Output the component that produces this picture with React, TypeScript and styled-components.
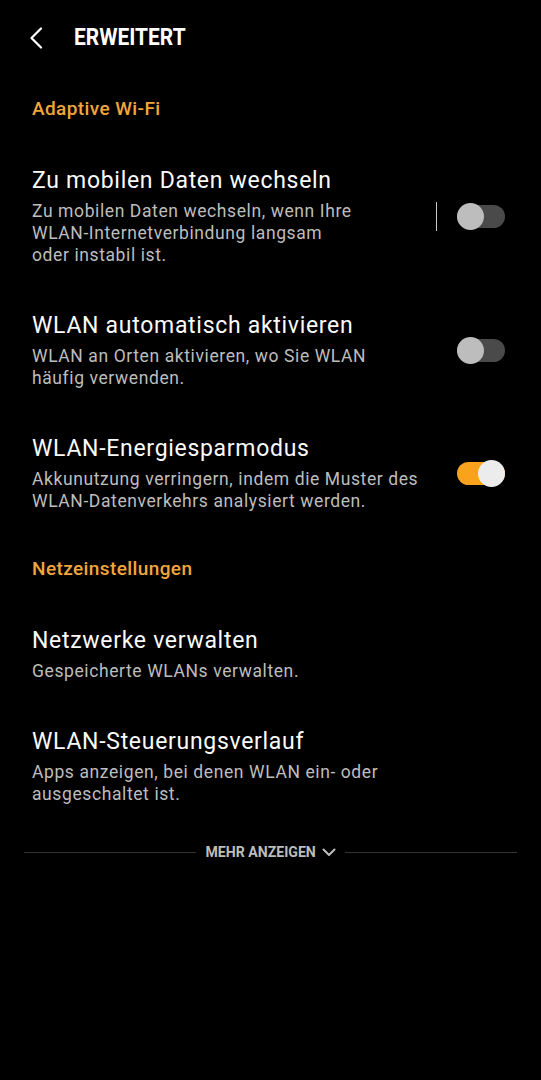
import styled, { createGlobalStyle } from 'styled-components';

const GlobalStyle = createGlobalStyle`
  html, body {
    margin: 0;
    padding: 0;
    background: #000;
  }
  body {
    font-family: Roboto, "Noto Sans", sans-serif;
    color: #fff;
    -webkit-font-smoothing: antialiased;
  }
`;

const Screen = styled.div`
  width: 541px;
  min-height: 1080px;
  background: #000;
`;

const Header = styled.header`
  height: 75px;
  display: flex;
  align-items: center;
  padding-left: 26px;
  box-sizing: border-box;
`;

const BackButton = styled.div`
  width: 20px;
  height: 24px;
  display: flex;
  align-items: center;
  justify-content: center;
  margin-right: 28px;
`;

const Title = styled.h1`
  margin: 0;
  font-size: 23px;
  font-weight: 700;
  display: inline-block;
  transform: scaleX(0.91);
  transform-origin: left center;
  line-height: 24px;
`;

const SectionHeader = styled.div`
  padding: 22px 32px 23px;
  font-size: 19px;
  letter-spacing: 0.4px;
  line-height: 24px;
  font-weight: 500;
  color: #f2a53a;
`;

const Item = styled.div`
  display: flex;
  align-items: center;
  padding: 23px 36px 23px 32px;
`;

const TextBlock = styled.div<{ $width?: number }>`
  flex: 1;
  max-width: ${({ $width }) => ($width ? `${$width}px` : 'none')};
`;

const ItemTitle = styled.div`
  font-size: 23px;
  letter-spacing: 0.7px;
  line-height: 28px;
  color: #fafafa;
  margin-bottom: 5px;
`;

const ItemSub = styled.div`
  font-size: 17.5px;
  letter-spacing: 0.6px;
  line-height: 22px;
  color: #bdbdbd;
`;

const Controls = styled.div`
  margin-left: auto;
  display: flex;
  align-items: center;
`;

const Divider = styled.div`
  width: 1px;
  height: 29px;
  background: #c8c8c8;
  margin-right: 20px;
`;

const Track = styled.div<{ $on?: boolean }>`
  position: relative;
  width: 48px;
  height: 23px;
  border-radius: 12px;
  background: ${({ $on }) => ($on ? '#f9a21b' : '#4a4a4a')};
`;

const Knob = styled.div<{ $on?: boolean }>`
  position: absolute;
  top: 50%;
  left: ${({ $on }) => ($on ? '21px' : '0')};
  width: 27px;
  height: 27px;
  margin-top: -13.5px;
  border-radius: 50%;
  background: ${({ $on }) => ($on ? '#ececec' : '#bdbdbd')};
`;

const MoreRow = styled.div`
  height: 48px;
  display: flex;
  align-items: center;
  padding: 0 24px;
  gap: 9px;
`;

const Line = styled.div`
  flex: 1;
  height: 1px;
  background: #333;
`;

const MoreLabel = styled.div`
  display: flex;
  align-items: center;
  gap: 6px;
  font-size: 15px;
  font-weight: 700;
  color: #bdbdbd;
`;

const MoreText = styled.span`
  display: inline-block;
  transform: scaleX(0.94);
  margin: 0 -3px;
`;

function Toggle({ on }: { on?: boolean }) {
  return (
    <Track $on={on}>
      <Knob $on={on} />
    </Track>
  );
}

export default function App() {
  return (
    <Screen>
      <GlobalStyle />
      <Header>
        <BackButton>
          <svg width="14" height="22" viewBox="0 0 14 22" fill="none">
            <polyline points="12,1.5 2.5,11 12,20.5" stroke="#fff" strokeWidth="2.2" strokeLinecap="round" strokeLinejoin="round" />
          </svg>
        </BackButton>
        <Title>ERWEITERT</Title>
      </Header>

      <SectionHeader>Adaptive Wi-Fi</SectionHeader>

      <Item>
        <TextBlock $width={326}>
          <ItemTitle>Zu mobilen Daten wechseln</ItemTitle>
          <ItemSub>Zu mobilen Daten wechseln, wenn Ihre WLAN-Internetverbindung langsam oder{'\u00a0'}instabil ist.</ItemSub>
        </TextBlock>
        <Controls>
          <Divider />
          <Toggle />
        </Controls>
      </Item>

      <Item>
        <TextBlock $width={370}>
          <ItemTitle>WLAN automatisch aktivieren</ItemTitle>
          <ItemSub>WLAN an Orten aktivieren, wo Sie WLAN häufig verwenden.</ItemSub>
        </TextBlock>
        <Controls>
          <Toggle />
        </Controls>
      </Item>

      <Item>
        <TextBlock $width={400}>
          <ItemTitle>WLAN-Energiesparmodus</ItemTitle>
          <ItemSub>Akkunutzung verringern, indem die Muster des WLAN-Datenverkehrs analysiert werden.</ItemSub>
        </TextBlock>
        <Controls>
          <Toggle on />
        </Controls>
      </Item>

      <SectionHeader>Netzeinstellungen</SectionHeader>

      <Item>
        <TextBlock>
          <ItemTitle>Netzwerke verwalten</ItemTitle>
          <ItemSub>Gespeicherte WLANs verwalten.</ItemSub>
        </TextBlock>
      </Item>

      <Item>
        <TextBlock $width={400}>
          <ItemTitle>WLAN-Steuerungsverlauf</ItemTitle>
          <ItemSub>Apps anzeigen, bei denen WLAN ein- oder ausgeschaltet ist.</ItemSub>
        </TextBlock>
      </Item>

      <MoreRow>
        <Line />
        <MoreLabel>
          <MoreText>MEHR ANZEIGEN</MoreText>
          <svg width="14" height="9" viewBox="0 0 14 9" fill="none">
            <polyline points="1.5,1.5 7,7 12.5,1.5" stroke="#bdbdbd" strokeWidth="2" strokeLinecap="round" strokeLinejoin="round" />
          </svg>
        </MoreLabel>
        <Line />
      </MoreRow>
    </Screen>
  );
}
